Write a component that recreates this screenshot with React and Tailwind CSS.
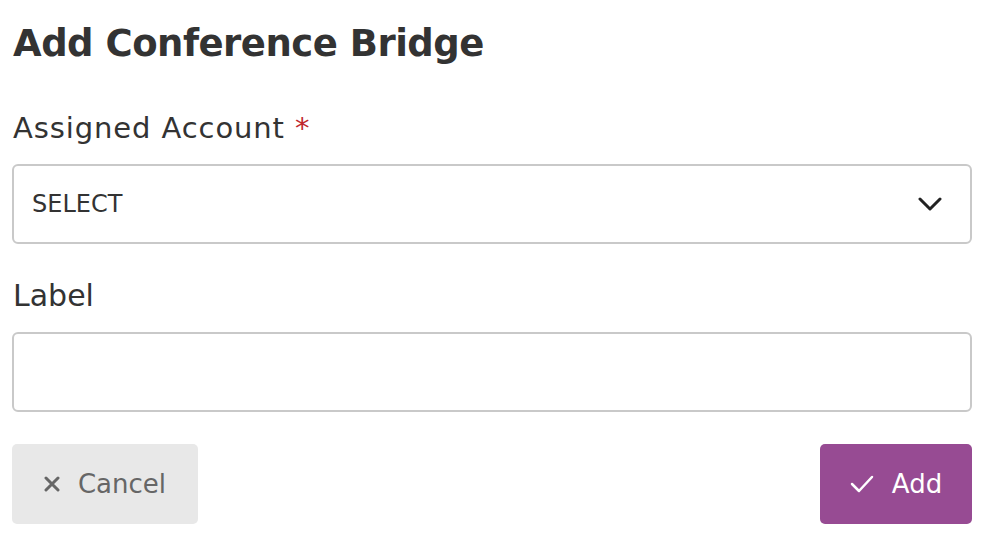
import { useState } from 'react';

const font = { fontFamily: '"DejaVu Sans", "Noto Sans", sans-serif' };

export default function App() {
  const [account, setAccount] = useState('');
  const [label, setLabel] = useState('');

  return (
    <div className="w-[986px] h-[550px] bg-white pl-3 pr-[14px] text-[#333]" style={font}>
      <h1 className="pt-[22px] pl-[1px] text-[37px] leading-[44px] font-semibold tracking-[-0.5px]">
        Add Conference Bridge
      </h1>

      <div className="mt-[45px]">
        <label className="block pl-[1px] text-[29px] leading-[34px] tracking-[0.9px]">
          Assigned Account <span className="text-[#c0282d]">*</span>
        </label>
        <div className="relative mt-[19px]">
          <select
            value={account}
            onChange={(e) => setAccount(e.target.value)}
            className="w-full h-[80px] appearance-none rounded-[6px] border-2 border-[#c9c9c9] bg-white pl-[18px] text-[24px] text-[#333] outline-none"
          >
            <option value="">SELECT</option>
          </select>
          <svg className="pointer-events-none absolute right-[30px] top-[33px]" width="24" height="14" viewBox="0 0 24 14" fill="none">
            <path d="M2 2l10 10 10-10" stroke="#222" strokeWidth="3" strokeLinecap="round" strokeLinejoin="round" />
          </svg>
        </div>
      </div>

      <div className="mt-[35px]">
        <label className="block pl-[1px] text-[30px] leading-[34px]">Label</label>
        <input
          value={label}
          onChange={(e) => setLabel(e.target.value)}
          className="mt-[19px] w-full h-[80px] rounded-[6px] border-2 border-[#c9c9c9] bg-white px-[18px] text-[24px] outline-none"
        />
      </div>

      <div className="mt-[32px] flex justify-between">
        <button className="flex h-[80px] w-[186px] items-center justify-center gap-[18px] rounded-[5px] bg-[#e8e8e8] text-[26px] text-[#666]">
          <svg width="16" height="16" viewBox="0 0 16 16" fill="none">
            <path d="M2 2l12 12M14 2L2 14" stroke="#666" strokeWidth="3" strokeLinecap="round" />
          </svg>
          Cancel
        </button>
        <button className="flex h-[80px] w-[152px] items-center justify-center gap-[18px] rounded-[5px] bg-[#974b93] text-[26px] text-white">
          <svg width="24" height="18" viewBox="0 0 24 18" fill="none">
            <path d="M2 9l7 7L22 2" stroke="#fff" strokeWidth="2.5" strokeLinecap="round" strokeLinejoin="round" />
          </svg>
          Add
        </button>
      </div>
    </div>
  );
}
